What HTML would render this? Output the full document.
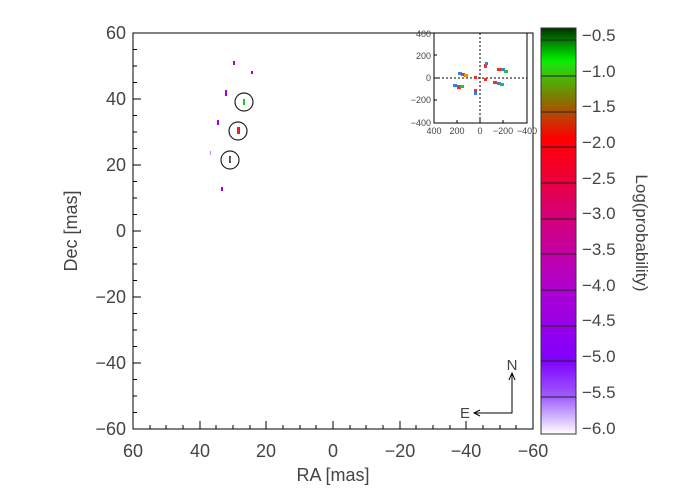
<!DOCTYPE html>
<html><head><meta charset="utf-8"><style>
body{margin:0;background:#fff;width:700px;height:499px;overflow:hidden}
text{font-family:"Liberation Sans",sans-serif;fill:#444}
</style></head><body>
<svg width="700" height="499" xmlns="http://www.w3.org/2000/svg">
<defs>
<linearGradient id="cb" x1="0" y1="1" x2="0" y2="0">
<stop offset="0" stop-color="#ffffff"/>
<stop offset="0.09" stop-color="#a060ff"/>
<stop offset="0.18" stop-color="#8000ff"/>
<stop offset="0.36" stop-color="#b000d0"/>
<stop offset="0.55" stop-color="#d80070"/>
<stop offset="0.64" stop-color="#f00030"/>
<stop offset="0.73" stop-color="#ff0000"/>
<stop offset="0.82" stop-color="#8a7000"/>
<stop offset="0.91" stop-color="#20e010"/>
<stop offset="0.92" stop-color="#00f000"/>
<stop offset="1" stop-color="#003000"/>
</linearGradient>
</defs>
<g transform="translate(0,-4)">
<rect x="133" y="37" width="400" height="396" fill="none" stroke="#000" stroke-width="1"/>
<g stroke="#000" stroke-width="1">
<path d="M133 37h8M133 103h8M133 169h8M133 235h8M133 301h8M133 367h8M133 433h8"/>
<path d="M133 53.5h4M133 70h4M133 86.5h4M133 119.5h4M133 136h4M133 152.5h4M133 185.5h4M133 202h4M133 218.5h4M133 251.5h4M133 268h4M133 284.5h4M133 317.5h4M133 334h4M133 350.5h4M133 383.5h4M133 400h4M133 416.5h4"/>
<path d="M133 433v-8M200 433v-8M266 433v-8M333 433v-8M400 433v-8M466 433v-8M533 433v-8"/>
<path d="M150 433v-4M166 433v-4M183 433v-4M216 433v-4M233 433v-4M250 433v-4M283 433v-4M300 433v-4M316 433v-4M350 433v-4M366 433v-4M383 433v-4M416 433v-4M433 433v-4M450 433v-4M483 433v-4M500 433v-4M516 433v-4"/>
</g>
<g font-size="18" text-anchor="end">
<text x="126" y="43">60</text><text x="126" y="109">40</text><text x="126" y="175">20</text><text x="126" y="241">0</text>
<text x="126" y="307">−20</text><text x="126" y="373">−40</text><text x="126" y="439">−60</text>
</g>
<g font-size="18" text-anchor="middle">
<text x="133" y="461">60</text><text x="200" y="461">40</text><text x="266" y="461">20</text><text x="333" y="461">0</text>
<text x="400" y="461">−20</text><text x="466" y="461">−40</text><text x="533" y="461">−60</text>
<text x="333" y="485">RA [mas]</text>
<text transform="translate(77,235) rotate(-90)">Dec [mas]</text>
</g>
</g>
<!-- data -->
<g fill="#a000e0">
<rect x="233" y="61" width="2" height="4"/><rect x="251" y="71" width="2" height="3"/>
<rect x="225" y="90" width="2" height="6"/><rect x="217" y="120" width="2" height="5"/>
<rect x="210" y="151" width="1" height="4" fill="#c080ff"/><rect x="221" y="187" width="2" height="4"/>
</g>
<rect x="243" y="99" width="2" height="6" fill="#20c020"/>
<rect x="237" y="127" width="3" height="7" fill="#f02020"/>
<rect x="229" y="156" width="2" height="7" fill="#b000c0"/><rect x="230" y="158" width="1" height="3" fill="#20c020"/>
<g fill="none" stroke="#222" stroke-width="1.2">
<circle cx="244" cy="102" r="9"/><circle cx="238" cy="131" r="9"/><circle cx="230" cy="160" r="9"/>
</g>
<g stroke="#000" fill="none" stroke-width="1">
<path d="M512 374v39h-38M509 380l3-7 3 7M480 410l-6 3 6 3"/>
</g>
<text x="512" y="370" font-size="15" text-anchor="middle" fill="#000">N</text>
<text x="465" y="418" font-size="15" text-anchor="middle" fill="#000">E</text>
<!-- inset -->
<rect x="434" y="33" width="93" height="90" fill="#fff" stroke="#000"/>
<path d="M434 78h93M480 33v90" stroke="#000" stroke-dasharray="2,2"/>
<g stroke="#000"><path d="M434 33h4M434 55h3M434 78h4M434 100h3M434 123h4M457 123v-3M480 123v-4M503 123v-3"/></g>
<g font-size="9" text-anchor="end"><text x="431" y="37">400</text><text x="431" y="59">200</text><text x="431" y="81">0</text><text x="431" y="103">−200</text><text x="431" y="126">−400</text></g>
<g font-size="9" text-anchor="middle"><text x="434" y="134">400</text><text x="457" y="134">200</text><text x="480" y="134">0</text><text x="503" y="134">−200</text><text x="527" y="134">−400</text></g>
<g>
<rect x="458" y="72" width="4" height="3" fill="#3080f0"/><rect x="461" y="73" width="4" height="3" fill="#f03020"/><rect x="464" y="74" width="4" height="3" fill="#f09000"/>
<rect x="453" y="84" width="4" height="3" fill="#3080f0"/><rect x="457" y="85" width="4" height="4" fill="#f03020"/><rect x="460" y="85" width="4" height="3" fill="#20c040"/>
<rect x="484" y="64" width="3" height="4" fill="#f03020"/><rect x="485" y="62" width="3" height="3" fill="#3080f0"/>
<rect x="474" y="89" width="3" height="5" fill="#f03020"/><rect x="474" y="92" width="3" height="3" fill="#3080f0"/>
<rect x="474" y="76" width="3" height="3" fill="#f03020"/><rect x="484" y="78" width="3" height="3" fill="#f03020"/>
<rect x="497" y="68" width="4" height="3" fill="#f03020"/><rect x="501" y="68" width="4" height="3" fill="#3080f0"/><rect x="504" y="70" width="4" height="3" fill="#20c040"/>
<rect x="493" y="81" width="4" height="3" fill="#f03020"/><rect x="497" y="82" width="4" height="3" fill="#3080f0"/><rect x="500" y="83" width="4" height="3" fill="#20c040"/>
</g>
<rect x="541" y="28" width="35" height="406" fill="url(#cb)" stroke="#333"/>
<g stroke="#222" stroke-width="1">
<path d="M541 40h35M541 76h35M541 112h35M541 147h35M541 183h35M541 219h35M541 254h35M541 290h35M541 326h35M541 361h35M541 397h35"/>
</g>
<g font-size="17">
<text x="582" y="41">−0.5</text><text x="582" y="77">−1.0</text><text x="582" y="112">−1.5</text><text x="582" y="148">−2.0</text>
<text x="582" y="184">−2.5</text><text x="582" y="219">−3.0</text><text x="582" y="255">−3.5</text><text x="582" y="291">−4.0</text>
<text x="582" y="326">−4.5</text><text x="582" y="362">−5.0</text><text x="582" y="398">−5.5</text><text x="582" y="434">−6.0</text>
<text transform="translate(636,233) rotate(90)" text-anchor="middle">Log(probability)</text>
</g>
</svg>
</body></html>
